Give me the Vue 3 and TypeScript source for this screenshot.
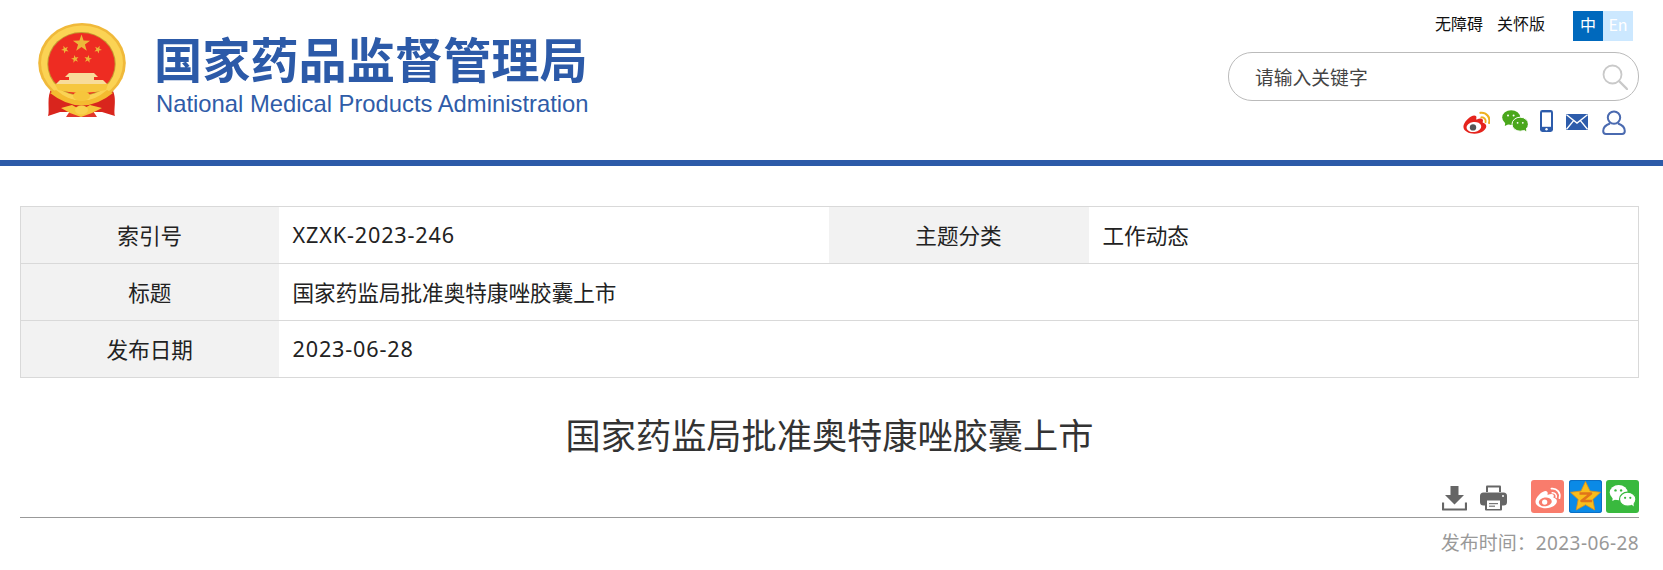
<script setup lang="ts">
const stars: [number, number, number, number][] = [
  [81.5, 43.5, 9, 0],
  [65, 49.5, 4, -25],
  [98, 49.5, 4, 25],
  [75, 59, 4, -12],
  [88, 59, 4, 12],
]
function starPoints(cx: number, cy: number, r: number, rot: number): string {
  const pts: string[] = []
  for (let i = 0; i < 10; i++) {
    const rad = i % 2 === 0 ? r : r * 0.4
    const a = ((-90 + rot + i * 36) * Math.PI) / 180
    pts.push(`${(cx + rad * Math.cos(a)).toFixed(2)},${(cy + rad * Math.sin(a)).toFixed(2)}`)
  }
  return pts.join(' ')
}
const docTitle = '国家药监局批准奥特康唑胶囊上市'
</script>

<template>
  <div class="page">
    <header class="top">
      <div class="brand">
        <svg class="emblem" viewBox="30 15 104 106" aria-hidden="true">
          <path d="M52 88 C46 96 50 110 48 116 L60 112 L102 112 L115 116 C113 110 118 96 111 88 Z" fill="#d9251d" />
          <path d="M66 117 L72 108 H91 L97 117 Z" fill="#e2362b" />
          <ellipse cx="82" cy="63" rx="43.8" ry="40" fill="#f0b93a" />
          <ellipse cx="82" cy="63" rx="41" ry="37.5" fill="#fbd354" />
          <ellipse cx="81.5" cy="64" rx="34.2" ry="32" fill="#c49a30" />
          <ellipse cx="81.5" cy="64" rx="33.2" ry="31" fill="#ee2c22" />
          <polygon v-for="(s, i) in stars" :key="i" :points="starPoints(s[0], s[1], s[2], s[3])" fill="#ecb63a" />
          <path d="M69 73 H94 L98 77 H94 V80 H103 L107 84 H56 L60 80 H69 V77 H65 Z" fill="#f8dc9a" />
          <path d="M55 84 H108 L106 90 Q82 96 58 90 Z" fill="#f6c73f" />
          <path d="M56 90 Q82 112 107 90 L113 93 Q82 118 50 93 Z" fill="#f4bb30" />
          <ellipse cx="81.5" cy="96" rx="8.5" ry="5" fill="#f6c63c" />
          <path d="M61 108 L72 105 L81 110 L90 105 L102 108 L92 113 L81 117 L70 113 Z" fill="#f6c63c" />
          <ellipse cx="81.5" cy="110" rx="6.5" ry="4.5" fill="#f9d24f" />
        </svg>
        <div class="brand-text">
          <div class="brand-cn">国家药品监督管理局</div>
          <div class="brand-en">National Medical Products Administration</div>
        </div>
      </div>
      <div class="tools">
        <div class="tools-top">
          <a class="tlink">无障碍</a>
          <a class="tlink second">关怀版</a>
          <div class="lang">
            <span class="zh">中</span>
            <span class="en">En</span>
          </div>
        </div>
        <div class="search">
          <span class="ph">请输入关键字</span>
          <svg class="mag" viewBox="0 0 26 26" aria-hidden="true">
            <circle cx="10.5" cy="10.5" r="9" fill="none" stroke="#c9c9c9" stroke-width="1.8" />
            <path d="M17 17 L25 25" stroke="#c9c9c9" stroke-width="2.4" stroke-linecap="round" />
          </svg>
        </div>
        <div class="socials">
          <svg class="s-weibo" viewBox="0 0 24 22" aria-hidden="true">
            <path d="M18.06 11.65c-.346-.105-.57-.18-.405-.615.375-.977.42-1.804 0-2.404-.781-1.112-2.915-1.053-5.364-.03 0 0-.766.331-.571-.271.376-1.217.315-2.224-.27-2.809-1.338-1.337-4.869.045-7.888 3.08C1.309 10.87 0 13.273 0 15.348c0 3.981 5.099 6.395 10.086 6.395 6.536 0 10.888-3.801 10.888-6.82 0-1.822-1.547-2.854-2.915-3.284z" fill="#e5241d" />
            <ellipse cx="9.6" cy="15.6" rx="6.8" ry="4.6" transform="rotate(-8 9.6 15.6)" fill="#fff" />
            <circle cx="8.8" cy="16" r="2.9" fill="#555" />
            <path d="M16.4 6.7 A3.6 3.6 0 0 1 20.3 11.2" fill="none" stroke="#eeb01e" stroke-width="1.7" stroke-linecap="round" />
            <path d="M15.6 2.6 A7.2 7.2 0 0 1 23.5 11.9" fill="none" stroke="#eeb01e" stroke-width="1.9" stroke-linecap="round" />
          </svg>
          <svg class="s-wechat" viewBox="0 0 26 22" aria-hidden="true">
            <ellipse cx="9.2" cy="7.6" rx="9" ry="7.4" fill="#4aa71c" />
            <path d="M3.4 11.5 L2.8 16 L8 13.6 Z" fill="#4aa71c" />
            <ellipse cx="18.2" cy="14.2" rx="8.2" ry="7" fill="#4aa71c" stroke="#fff" stroke-width="1" />
            <path d="M21.5 19 L24.2 21.6 L24 17 Z" fill="#4aa71c" />
            <circle cx="6" cy="5.4" r="1" fill="#fff" />
            <circle cx="11.6" cy="5.4" r="1" fill="#fff" />
            <circle cx="15.6" cy="12.8" r=".9" fill="#fff" />
            <circle cx="20.8" cy="12.8" r=".9" fill="#fff" />
          </svg>
          <svg class="s-phone" viewBox="0 0 13 22" aria-hidden="true">
            <rect x="0" y="0" width="13" height="22" rx="2.4" fill="#2d5cab" />
            <rect x="2" y="2.4" width="9" height="14.4" fill="#fff" />
            <circle cx="6.5" cy="19.3" r="1.2" fill="#fff" />
          </svg>
          <svg class="s-mail" viewBox="0 0 22 16" aria-hidden="true">
            <rect x="0" y="0" width="22" height="16" rx="1" fill="#2d5cab" />
            <path d="M0.5 0.8 L11 9 L21.5 0.8 M0.5 15.2 L7.6 6.6 M21.5 15.2 L14.4 6.6" fill="none" stroke="#fff" stroke-width="1.4" />
          </svg>
          <svg class="s-user" viewBox="0 0 24 25" aria-hidden="true">
            <circle cx="12" cy="7.6" r="6.2" fill="none" stroke="#4a6ab0" stroke-width="2" />
            <path d="M8 13.5 C3.5 15 1.2 18 1.2 21 C1.2 23 2.4 24 4 24 H20 C21.6 24 22.8 23 22.8 21 C22.8 18 20.5 15 16 13.5" fill="none" stroke="#4a6ab0" stroke-width="2" />
          </svg>
        </div>
      </div>
    </header>

    <main class="main">
      <table class="meta">
        <colgroup>
          <col class="c1" />
          <col class="c2" />
          <col class="c3" />
          <col />
        </colgroup>
        <tbody>
          <tr>
            <th>索引号</th>
            <td class="latin">XZXK-2023-246</td>
            <th>主题分类</th>
            <td>工作动态</td>
          </tr>
          <tr>
            <th>标题</th>
            <td colspan="3">{{ docTitle }}</td>
          </tr>
          <tr>
            <th>发布日期</th>
            <td colspan="3" class="latin">2023-06-28</td>
          </tr>
        </tbody>
      </table>

      <h1 class="title">{{ docTitle }}</h1>

      <div class="actions">
        <svg class="a-down" viewBox="0 0 25 25" aria-hidden="true">
          <path d="M8.5 0 H16.5 V9 H22 L12.5 18.5 L3 9 H8.5 Z" fill="#666" />
          <path d="M1 16.5 V23.5 H24 V16.5" fill="none" stroke="#666" stroke-width="2.2" stroke-linejoin="round" />
        </svg>
        <svg class="a-print" viewBox="0 0 27 26" aria-hidden="true">
          <path d="M6 7 V1.5 Q6 .5 7 .5 H20 Q21 .5 21 1.5 V7 Z" fill="#666" />
          <rect x="8" y="2.5" width="11" height="4.5" fill="#fff" />
          <rect x="0" y="7.5" width="27" height="13" rx="3.5" fill="#666" />
          <rect x="5" y="14" width="17" height="11.5" rx="1" fill="#666" />
          <rect x="7" y="15.5" width="13" height="8.5" fill="#fff" />
          <rect x="9" y="18" width="9" height="1.2" fill="#777" />
          <rect x="9" y="20.6" width="6" height="1.2" fill="#777" />
          <circle cx="23" cy="11" r="1" fill="#fff" />
        </svg>
        <div class="shares">
          <span class="share sw">
            <svg viewBox="0 0 33 33" aria-hidden="true">
              <g transform="translate(4.5 6) scale(1.02)">
                <path d="M18.06 11.65c-.346-.105-.57-.18-.405-.615.375-.977.42-1.804 0-2.404-.781-1.112-2.915-1.053-5.364-.03 0 0-.766.331-.571-.271.376-1.217.315-2.224-.27-2.809-1.338-1.337-4.869.045-7.888 3.08C1.309 10.87 0 13.273 0 15.348c0 3.981 5.099 6.395 10.086 6.395 6.536 0 10.888-3.801 10.888-6.82 0-1.822-1.547-2.854-2.915-3.284z" fill="#fff" />
                <ellipse cx="9.6" cy="15.6" rx="6.4" ry="4.3" transform="rotate(-8 9.6 15.6)" fill="#f97c6c" />
                <circle cx="9" cy="15.8" r="2.6" fill="#fff" />
                <path d="M16.4 6.7 A3.6 3.6 0 0 1 20.3 11.2" fill="none" stroke="#fff" stroke-width="1.5" stroke-linecap="round" />
                <path d="M15.6 2.6 A7.2 7.2 0 0 1 23.5 11.9" fill="none" stroke="#fff" stroke-width="1.7" stroke-linecap="round" />
              </g>
            </svg>
          </span>
          <span class="share sq">
            <svg viewBox="0 0 33 33" aria-hidden="true">
              <polygon points="16.5,1.5 21,11 31.5,12.3 23.8,19.4 25.8,30 16.5,24.8 7.2,30 9.2,19.4 1.5,12.3 12,11" fill="#f8bd1c" stroke="#dd9018" stroke-width=".8" stroke-linejoin="round" />
              <path d="M10.5 13.5 H22 L12.5 21 H23" fill="none" stroke="#e0741a" stroke-width="2.6" stroke-linejoin="round" />
            </svg>
          </span>
          <span class="share sc">
            <svg viewBox="0 0 33 33" aria-hidden="true">
              <g transform="translate(3.5 5)">
                <ellipse cx="9.2" cy="7.6" rx="9" ry="7.6" fill="#fff" />
                <path d="M3.4 11.5 L2.8 16 L8 13.6 Z" fill="#fff" />
                <ellipse cx="18.2" cy="14.2" rx="8.2" ry="7" fill="#fff" stroke="#39b93e" stroke-width="1.2" />
                <path d="M21.5 19 L24.2 21.6 L24 17 Z" fill="#fff" />
                <circle cx="6" cy="5.4" r="1.2" fill="#39b93e" />
                <circle cx="11.6" cy="5.4" r="1.2" fill="#39b93e" />
                <circle cx="15.6" cy="12.8" r="1.1" fill="#39b93e" />
                <circle cx="20.8" cy="12.8" r="1.1" fill="#39b93e" />
              </g>
            </svg>
          </span>
        </div>
      </div>
      <div class="pubtime">发布时间：<span class="pubdate">2023-06-28</span></div>
    </main>
  </div>
</template>

<style>
html,
body {
  margin: 0;
  background: #fff;
}
</style>

<style scoped>
.page {
  width: 1663px;
  font-family: "Noto Sans CJK SC", "Noto Sans", sans-serif;
  color: #222;
}
.top {
  height: 160px;
  border-bottom: 6px solid #2c5aa8;
  display: flex;
  justify-content: space-between;
}
.brand {
  display: flex;
  align-items: flex-start;
  padding: 15px 0 0 30px;
}
.emblem {
  width: 104px;
  height: 106px;
  display: block;
  filter: blur(0.4px);
}
.brand-text {
  margin: 13px 0 0 22px;
  width: 432px;
}
.brand-cn {
  font-size: 48.2px;
  line-height: 58px;
  font-weight: 700;
  color: #2c5aa8;
  white-space: nowrap;
  margin-left: -2px;
}
.brand-en {
  font-family: "Liberation Sans", sans-serif;
  font-size: 23.8px;
  line-height: 26px;
  margin-top: 5px;
  color: #2f5ca8;
  white-space: nowrap;
}
.tools {
  width: 411px;
  margin-right: 24px;
  display: flex;
  flex-direction: column;
}
.tools-top {
  display: flex;
  align-items: flex-start;
  padding: 11px 6px 0 0;
  justify-content: flex-end;
}
.tlink {
  font-size: 16px;
  line-height: 25px;
  color: #111;
}
.second {
  margin-left: 14px;
}
.lang {
  display: flex;
  margin-left: 28px;
}
.lang span {
  width: 30px;
  height: 30px;
  line-height: 27px;
  text-align: center;
  font-size: 16px;
  color: #fff;
}
.zh {
  background: #0069bd;
}
.en {
  background: #cce8ff;
}
.search {
  margin-top: 11px;
  height: 47px;
  border: 1px solid #bbb;
  border-radius: 24px;
  display: flex;
  align-items: center;
  justify-content: space-between;
  padding: 0 10px 0 26px;
}
.ph {
  font-size: 18.8px;
  color: #444;
  line-height: 45px;
  height: 45px;
}
.mag {
  width: 26px;
  height: 26px;
}
.socials {
  display: flex;
  align-items: flex-start;
  margin-top: 9px;
  padding-left: 235px;
}
.s-weibo {
  width: 27px;
  height: 24px;
}
.s-wechat {
  width: 26px;
  height: 22px;
  margin-left: 12px;
}
.s-phone {
  width: 13px;
  height: 22px;
  margin-left: 12px;
}
.s-mail {
  width: 22px;
  height: 16px;
  margin: 4px 0 0 13px;
}
.s-user {
  width: 24px;
  height: 25px;
  margin-left: 14px;
}
.main {
  width: 1619px;
  margin-left: 20px;
}
.meta {
  margin-top: 40px;
  width: 100%;
  border-collapse: collapse;
  table-layout: fixed;
  border: 1px solid #d9d9d9;
}
.c1 {
  width: 258px;
}
.c2 {
  width: 550px;
}
.c3 {
  width: 260px;
}
.meta tr {
  height: 57px;
  border-bottom: 1px solid #d9d9d9;
}
.meta th {
  background: #f2f2f2;
  font-weight: 400;
  font-size: 21.6px;
  line-height: 28px;
  text-align: center;
  color: #222;
  padding: 0 0 1px;
}
.meta td {
  font-size: 21.6px;
  line-height: 28px;
  padding: 0 0 1px 14px;
  color: #222;
}
.meta td.latin {
  font-family: "Noto Sans", sans-serif;
  letter-spacing: 0.85px;
  padding-bottom: 0;
}
.title {
  margin: 30px 0 0;
  font-size: 35.2px;
  line-height: 52px;
  font-weight: 400;
  text-align: center;
  color: #333;
}
.actions {
  display: flex;
  align-items: center;
  justify-content: flex-end;
  margin-top: 19px;
  height: 38px;
  border-bottom: 1px solid #999;
}
.a-down {
  width: 25px;
  height: 25px;
}
.a-print {
  width: 27px;
  height: 26px;
  margin-left: 13px;
}
.shares {
  display: flex;
  gap: 4.5px;
  margin-left: 24px;
}
.share {
  width: 33px;
  height: 33px;
  border-radius: 3px;
  display: block;
  margin-bottom: 4px;
}
.share svg {
  width: 33px;
  height: 33px;
  display: block;
}
.sw {
  background: #f97c6c;
}
.sq {
  background: #0a8ae6;
  box-shadow: inset 0 0 0 1px #0b6fc4;
}
.sc {
  background: #39b93e;
}
.pubtime {
  text-align: right;
  font-size: 19px;
  line-height: 26px;
  margin-top: 11px;
  color: #999;
}
.pubdate {
  font-family: "Noto Sans", sans-serif;
  letter-spacing: 0.4px;
}
</style>
